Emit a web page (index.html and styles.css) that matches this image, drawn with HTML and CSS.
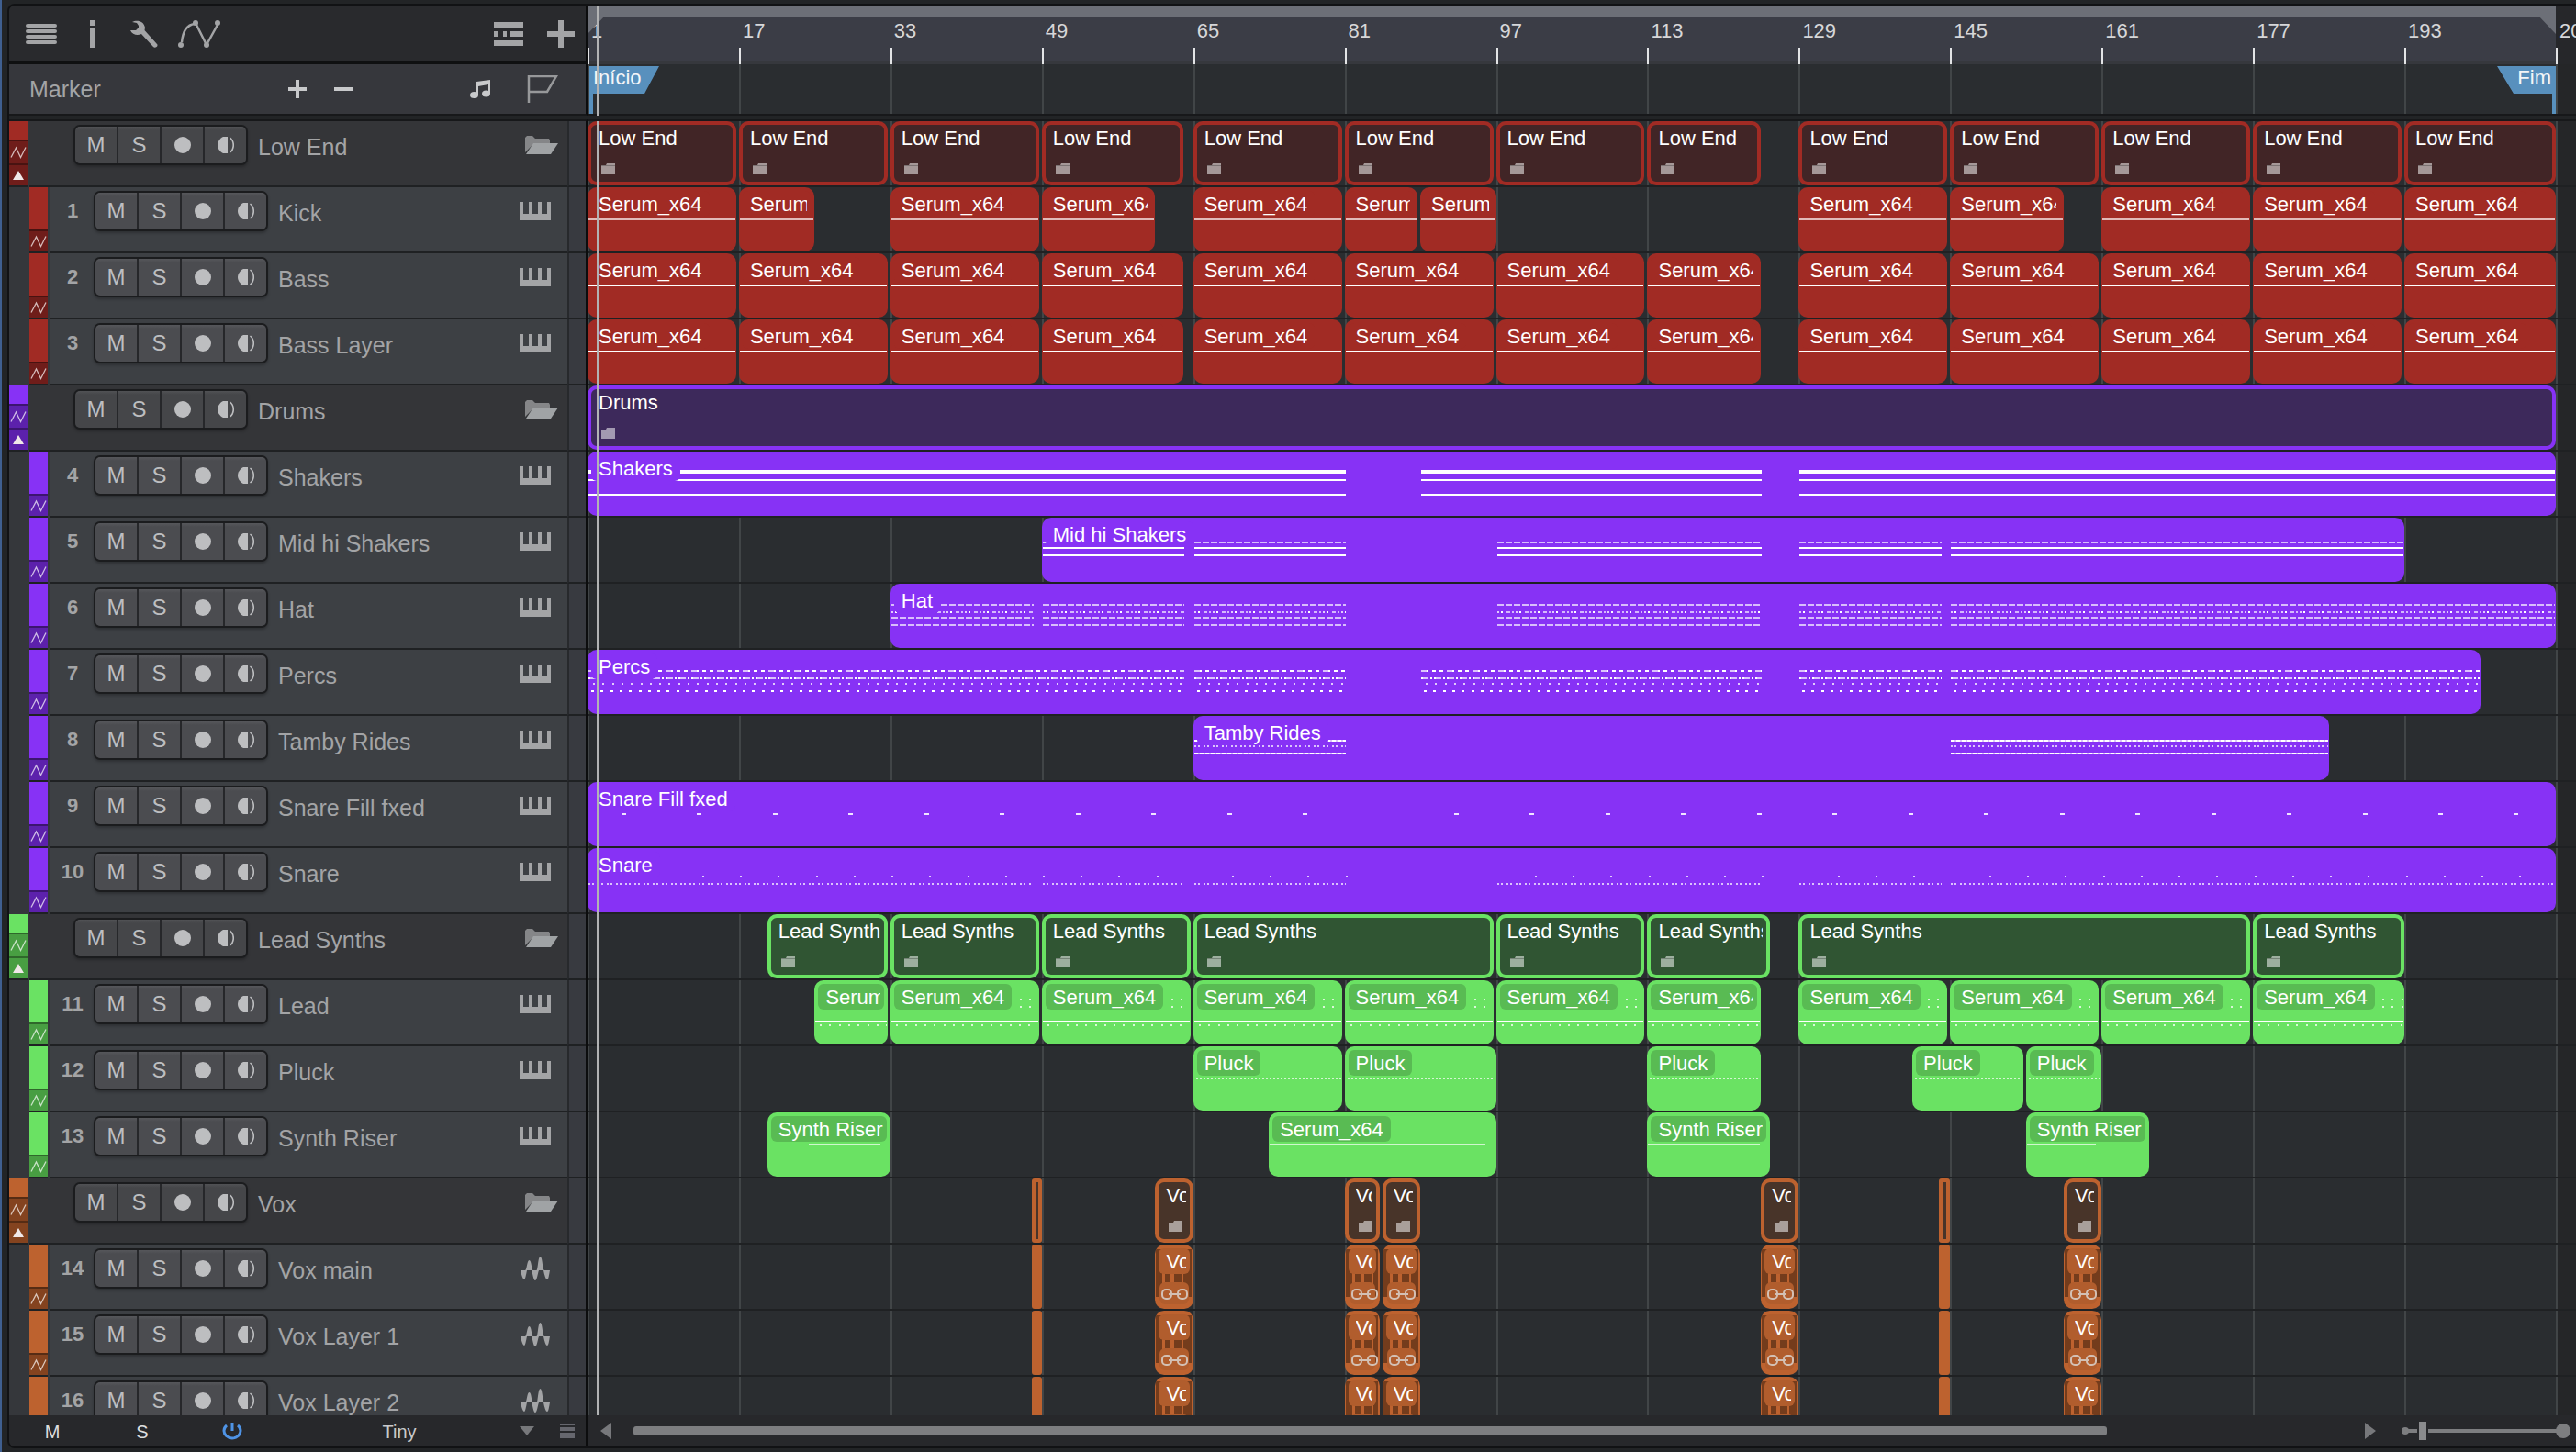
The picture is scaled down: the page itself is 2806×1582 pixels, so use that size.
FILE: index.html
```html
<!DOCTYPE html>
<html lang="en">
<head>
<meta charset="utf-8">
<title>Arrangement</title>
<link rel="stylesheet" href="styles.css">
</head>
<body>
<svg class="sprite" aria-hidden="true">
  <symbol id="i-rec" viewBox="0 0 18 18"><circle cx="9" cy="9" r="9"/></symbol>
  <symbol id="i-monitor" viewBox="0 0 18 18"><path d="M6 0h5v18H6C2 16 0 12 0 9s2-7 6-9z"/><path d="M13.500 1c5 4 5 12 0 16" fill="none" stroke="currentColor" stroke-width="1.600"/></symbol>
  <symbol id="i-automation" viewBox="0 0 20 20"><path d="M2 15.500L7.500 5l5 10.500L18 4.500" fill="none" stroke="currentColor" stroke-width="1.300"/></symbol>
  <symbol id="i-keys" viewBox="0 0 42 26"><path d="M0 3h4v13h6V3h4v13h6V3h4v13h6V3h4v20H0z"/></symbol>
  <symbol id="i-folder" viewBox="0 0 42 26"><path d="M6 21V5l2-2h6l3 3h15l1 2v3H16z" fill="#858688"/><path d="M15 11h27l-8 12H7z" fill="#a0a3a5"/></symbol>
  <symbol id="i-wave" viewBox="0 0 42 26"><path d="M1 15h5c2 0 2-11 4.500-11S13 15 14.500 15h4C20 15 20 0 22.500 0S25 15 27 15h6c-1 5-1.500 10-3 10s-3-5-4-10h-5c-1.500 4-2 11-4 11s-2.500-7-4-11H8c-1 5-2 10-3 10s-3-4-4-10z"/></symbol>
  <symbol id="i-clipfolder" viewBox="0 0 16 12"><path d="M0 2h5l1-2h9v12H0z"/><path d="M0 2.500h15" stroke="#000" stroke-opacity=".25"/></symbol>
  <symbol id="i-link" viewBox="0 0 30 12"><g fill="none" stroke="currentColor" stroke-width="2"><rect x="1" y="1" width="10" height="10" rx="4"/><rect x="18" y="1" width="10" height="10" rx="4"/><path d="M8 6h13"/></g></symbol>
</svg>

<main class="arranger">
  <header class="toolbar">
    <button class="tool" aria-label="Track list"><svg width="34" height="24" viewBox="0 0 34 24"><g stroke="currentColor" stroke-width="4" stroke-linecap="round"><path d="M2 3h30M2 9h30M2 15h30M2 21h30"/></g></svg></button>
    <button class="tool tool-info" aria-label="Inspector"><svg width="6" height="30" viewBox="0 0 6 30"><path d="M0 0h6v6H0zM0 8h6v22H0z"/></svg></button>
    <button class="tool" aria-label="Options"><svg width="30" height="30" viewBox="0 0 30 30"><path d="M2 2C7-1 15 1 16 8l-.5 3L29 26c2 2-2 5-4 3L12 15C8 17 2 16 0 11h6l3-3V6L7 3z"/></svg></button>
    <button class="tool" aria-label="Automation"><svg width="48" height="30" viewBox="0 0 48 30"><path d="M4 24C5 14 9 5 18 4M20 5l11 22M32 25L43 5" fill="none" stroke="currentColor" stroke-width="2.500"/><circle cx="3" cy="27" r="3"/><circle cx="19" cy="3" r="3"/><circle cx="31" cy="27" r="3"/><circle cx="43" cy="3" r="3"/></svg></button>
    <button class="tool tool-layout" aria-label="Track height layout"><svg width="32" height="26" viewBox="0 0 32 26"><path d="M0 0h32v6H0zM0 10h5v6H0zM10 10h4v6h-4zM18 10h14v6H18zM0 20h32v6H0z"/></svg></button>
    <button class="tool" aria-label="Add track"><svg width="30" height="30" viewBox="0 0 30 30"><path d="M12 0h6v12h12v6H18v12h-6V18H0v-6h12z"/></svg></button>
  </header>

  <div class="ruler" id="ruler">
    <div class="loop"></div>
  </div>

  <div class="marker-head">
    <h2 class="marker-title">Marker</h2>
    <button class="tool" aria-label="Add marker"><svg width="20" height="20" viewBox="0 0 20 20"><path d="M8 0h4v8h8v4h-8v8H8v-8H0V8h8z"/></svg></button>
    <button class="tool tool-minus" aria-label="Remove marker"><svg width="20" height="20" viewBox="0 0 20 20"><path d="M0 8h20v4H0z"/></svg></button>
    <button class="tool tool-note" aria-label="Timebase"><svg width="22" height="20" viewBox="0 0 22 20"><path d="M7 2l15-2v15h-2V5L9 7v9H7z"/><ellipse cx="4.500" cy="16.500" rx="4.500" ry="3.500"/><ellipse cx="17.500" cy="15" rx="4.500" ry="3.500"/></svg></button>
    <button class="tool tool-flag" aria-label="Marker flag"><svg width="34" height="30" viewBox="0 0 34 30"><path d="M2 30V1h30L22 18H2" fill="none" stroke="currentColor" stroke-width="2.500"/></svg></button>
  </div>

  <div class="marker-lane">
    <div class="flag flag-start"><span>Início</span></div>
    <div class="flag flag-end"><span>Fim</span></div>
  </div>

  <ul class="tracks" id="tracks"></ul>
  <div class="lanes" id="lanes"></div>

  <div class="playhead playhead-top"></div>

  <footer class="track-foot">
    <button class="foot-btn">M</button>
    <button class="foot-btn">S</button>
    <button class="foot-btn foot-power" aria-label="Enable"><svg width="22" height="20" viewBox="0 0 22 20"><path d="M5 3a9 8 0 1 0 12 0" fill="none" stroke="currentColor" stroke-width="3"/><path d="M11 0v9" stroke="currentColor" stroke-width="3"/></svg></button>
    <select class="size-select" aria-label="Track height"><option>Tiny</option><option>Small</option><option>Normal</option></select>
    <svg class="caret" width="16" height="10" viewBox="0 0 16 10"><path d="M0 0h16L8 10z"/></svg>
    <button class="foot-list" aria-label="Track height list"><svg width="16" height="16" viewBox="0 0 16 16"><path d="M0 0h16v2H0zM0 4h16v4H0zM0 10h16v6H0z"/></svg></button>
  </footer>

  <footer class="time-foot">
    <button class="scroll-btn" aria-label="Scroll left"><svg width="12" height="18" viewBox="0 0 12 18"><path d="M12 0v18L0 9z"/></svg></button>
    <div class="scroll-track"><div class="scroll-thumb"></div></div>
    <button class="scroll-btn" aria-label="Scroll right"><svg width="12" height="18" viewBox="0 0 12 18"><path d="M0 0v18l12-9z"/></svg></button>
    <label class="zoom"><span class="dot dot-small"></span><input type="range" min="0" max="100" value="7" aria-label="Zoom"><span class="dot dot-large"></span></label>
  </footer>
</main>
<script src="app.js"></script>
</body>
</html>
```
FILE: styles.css
```css
:root {
  --bar: calc(134px / 13);
  --song: calc(208 * var(--bar));
  --edge: #111214;
  --line: #1f2123;
  --lane: #2a2d30;
  --grid: #414547;
  --icon: #a3a4a6;
}

* { box-sizing: border-box; }

body {
  margin: 0;
  height: 100vh;
  padding: 4px 0 4px 8px;
  background: #222426;
  box-shadow: inset 2px 0 #3f5f90;
  color: #a3a4a6;
  font: 24px/28px "Liberation Sans", Arial, sans-serif;
  overflow: hidden;
}

button, select {
  border: 0;
  margin: 0;
  padding: 0;
  background: none;
  color: inherit;
  font: inherit;
}

svg { display: block; fill: currentColor; }
.sprite { position: absolute; width: 0; height: 0; }

.arranger {
  position: relative;
  height: 100%;
  display: grid;
  grid-template-columns: 630px minmax(0, 1fr);
  grid-template-rows: 64px 56px minmax(0, 1fr) 34px;
  border: 2px solid var(--edge);
  border-right: 0;
  border-radius: 8px 0 0 8px;
  overflow: hidden;
}

.toolbar, .marker-head, .tracks, .track-foot { border-right: 2px solid #0c0d0e; }

/* Toolbar */
.toolbar {
  display: flex;
  align-items: center;
  gap: 22px;
  padding: 2px 12px 0 18px;
  background: #292a2d;
  border-bottom: 4px solid #0f1011;
  color: var(--icon);
}
.toolbar .tool-info { margin: 0 16px 0 14px; }
.toolbar .tool-layout { margin: 0 4px 0 auto; }

.marker-head {
  display: flex;
  align-items: center;
  padding: 0 30px 0 22px;
  background: #36373c;
  border-bottom: 2px solid #17181a;
  color: #c8c9cb;
}
.marker-title {
  width: 282px;
  margin: 0;
  font-size: 25px;
  font-weight: 400;
  color: var(--icon);
}
.tool-minus { margin-left: 30px; }
.tool-note { margin-left: auto; }
.tool-flag { margin-left: 40px; color: #97989a; }

/* Ruler */
.ruler {
  position: relative;
  overflow: hidden;
  background: #26272a;
  font-size: 22px;
  color: #d6d7d9;
}
.loop {
  width: var(--song);
  height: 100%;
  border-top: 12px solid #6c6f77;
  background: #3b3d46;
  border-bottom: 4px solid #36383d;
}
.loop::before, .loop::after {
  content: "";
  position: absolute;
  z-index: 2;
  top: 10px;
  width: 20px;
  height: 21px;
  background: #6c6f77;
}
.loop::before { left: 0; clip-path: polygon(0 0, 100% 0, 0 100%); }
.loop::after { left: calc(var(--song) - 20px); clip-path: polygon(0 0, 100% 0, 100% 100%); }
.tick {
  position: absolute;
  top: 0;
  bottom: 0;
  left: calc(var(--at) * var(--bar));
  padding: 14px 0 0 4px;
}
.tick::before {
  content: "";
  position: absolute;
  left: 0;
  bottom: 0;
  width: 2px;
  height: 18px;
  background: #e3e4e6;
}

.marker-lane, .lane {
  background:
    linear-gradient(90deg, transparent calc(var(--song) + 2px), #252628 0),
    repeating-linear-gradient(90deg, var(--grid) 0 2px, transparent 2px calc(16 * var(--bar))),
    var(--lane);
}
.marker-lane {
  position: relative;
  border-bottom: 2px solid #17181a;
  font-size: 22px;
  line-height: 26px;
  color: #f4f6f8;
}
.flag {
  position: absolute;
  top: 2px;
  height: 52px;
  background: #5890bd;
}
.flag-start {
  left: 2px;
  width: 76px;
  padding-left: 4px;
  clip-path: polygon(0 0, 100% 0, 60px 30px, 4px 30px, 4px 100%, 0 100%);
}
.flag-end {
  left: calc(var(--song) - 64px);
  width: 64px;
  padding-right: 5px;
  text-align: right;
  clip-path: polygon(0 0, 100% 0, 100% 100%, 60px 100%, 60px 30px, 18px 30px);
}

/* Track list */
.tracks, .lanes {
  margin: 4px 0 0;
  padding: 0;
  list-style: none;
  border-top: 2px solid #17181a;
  overflow: hidden;
}
.tracks { background: #35373b; }

.red { --hue: #a12b24; --deep: #6f1d1a; --fill: #412526; --tag: #a12b24; }
.purple { --hue: #8732f5; --deep: #5c21ac; --fill: #3d295b; --tag: #8732f5; }
.green { --hue: #6ae263; --deep: #489e42; --fill: #305533; --tag: #59bb53; }
.orange { --hue: #bd622f; --deep: #84431f; --fill: #483429; --tag: #b15d2d; }

.track {
  display: flex;
  height: 72px;
  padding-left: 22px;
}
.track.folder { padding-left: 0; }
.strip {
  display: flex;
  flex-direction: column;
  gap: 2px;
  width: 20px;
  margin-right: 2px;
  background: color-mix(in srgb, var(--deep) 65%, #000);
  border-bottom: 2px solid var(--line);
  color: rgba(255, 255, 255, .7);
}
.strip .swatch { flex: 1; background: var(--hue); }
.strip .auto, .strip .fold {
  display: grid;
  place-items: center;
  width: 20px;
  height: 22px;
  background: var(--deep);
  color: inherit;
}
.folder .auto { height: 24px; }
.strip .fold { color: #f0e8e8; }
.track-body {
  flex: 1;
  display: flex;
  align-items: center;
  padding: 4px 10px 22px 0;
  background: #3d4044;
  border-bottom: 2px solid var(--line);
}
.folder .track-body { padding-left: 48px; background: #343538; }
.track-end {
  width: 20px;
  border-left: 2px solid #27292c;
  border-bottom: 2px solid var(--line);
  background: #383a40;
}
.track-num {
  width: 48px;
  padding-left: 2px;
  text-align: center;
  font-size: 22px;
  font-weight: 700;
}
.switches {
  display: flex;
  gap: 2px;
  width: 190px;
  height: 44px;
  border: 2px solid #1b1c1e;
  border-radius: 7px;
  background: #26272a;
  box-shadow: 0 2px 3px rgba(0, 0, 0, .25);
  overflow: hidden;
}
.switches button {
  flex: 1;
  display: grid;
  place-items: center;
  background: linear-gradient(#56575b, #4b4c50 4px);
  color: #bdbec0;
}
.folder .switches button { background: linear-gradient(#515255, #454649 4px); }
.track-name { flex: 1; padding: 3px 0 0 11px; font-size: 25px; }

/* Clips */
.lane {
  position: relative;
  height: 72px;
  border-bottom: 2px solid var(--line);
}
.clip {
  position: absolute;
  top: 0;
  left: calc(var(--at) * var(--bar));
  width: calc(var(--len) * var(--bar));
  height: 70px;
  border-radius: 10px;
  background: var(--hue);
  overflow: hidden;
  color: #fff;
  font-size: 22px;
}
.clip.joined { width: calc(var(--len) * var(--bar) - 3px); }
.clip.group { background: var(--fill); box-shadow: inset 0 0 0 4px var(--hue); }
.clip.sliver { border-radius: 3px; }
.label {
  position: absolute;
  top: 4px;
  left: 4px;
  max-width: calc(100% - 8px);
  height: 28px;
  padding: 1px 4px 0 8px;
  border-radius: 6px;
  background: var(--tag);
}
.group .label { background: none; }
.label span {
  display: block;
  padding-right: 4px;
  overflow: hidden;
  white-space: nowrap;
}
.clip-icon { position: absolute; left: 15px; top: 46px; color: rgba(255, 255, 255, .53); }

.notes {
  position: absolute;
  top: var(--y);
  left: calc(var(--from) * var(--bar) + var(--inset, 1px));
  right: calc(var(--rest) * var(--bar) + 1px);
  height: 2px;
}
.solid { background: #fff; }
.thick { height: 4px; background: #fff; }
.soft { background: rgba(255, 255, 255, .68); }
.dash { background: repeating-linear-gradient(90deg, rgba(255, 255, 255, .68) 0 7px, transparent 7px 9px); }
.mixed { background: repeating-linear-gradient(90deg, rgba(255, 255, 255, .75) 0 2px, transparent 2px 4px, #fff 4px 6px, transparent 6px 10px, rgba(255, 255, 255, .65) 10px 14px, transparent 14px 16px, rgba(255, 255, 255, .65) 16px 18px, transparent 18px 20px); }
.busy { background: repeating-linear-gradient(90deg, rgba(255, 255, 255, .7) 0 6px, #fff 6px 8px, transparent 8px 12px, #fff 12px 16px, transparent 16px 20px, #fff 20px 24px, transparent 24px 28px); }
.dense { background: repeating-linear-gradient(90deg, #fff 0 2px, rgba(255, 255, 255, .7) 2px 8px, transparent 8px 10px, #fff 10px 12px, transparent 12px 14px); }
.full { background: repeating-linear-gradient(90deg, #fff 0 4px, rgba(255, 255, 255, .7) 4px 6px); }
.dots { background: repeating-linear-gradient(90deg, transparent 0 2px, rgba(255, 255, 255, .7) 2px 4px); }
.pairs { background: repeating-linear-gradient(90deg, rgba(255, 255, 255, .7) 0 2px, transparent 2px 4px, rgba(255, 255, 255, .7) 4px 6px, transparent 6px 10px); }
.beats { background: repeating-linear-gradient(90deg, transparent 0 5px, rgba(255, 255, 255, .75) 5px 7px, transparent 7px var(--bar)); }
.strong { background: repeating-linear-gradient(90deg, transparent 0 3px, #fff 3px 6px, transparent 6px var(--bar)); }
.fills { background: repeating-linear-gradient(90deg, #f0e4ff 0 5px, transparent 5px calc(8 * var(--bar))); }
.hits { background: repeating-linear-gradient(90deg, rgba(255, 255, 255, .75) 0 2px, transparent 2px calc(4 * var(--bar))); }
.lead-top { --inset: 136px; }

/* Audio clip: waveform blocks behind the name and link tags */
.wave {
  position: absolute;
  inset: 5px 2px 13px 1px;
  background: linear-gradient(90deg, #743c1c 0 7px, var(--hue) 7px 10px, #743c1c 10px 16px, var(--hue) 16px 20px, #743c1c 20px 28px, var(--hue) 28px 30px, #743c1c 30px);
}
.link {
  position: absolute;
  top: 41px;
  left: 5px;
  right: 5px;
  height: 24px;
  border-radius: 6px;
  background: var(--tag);
}
.link-icon { position: absolute; left: 7px; top: 48px; color: #d3c0b4; }

.playhead {
  position: absolute;
  left: 640px;
  z-index: 3;
  width: 2px;
  background: #b2b3b4;
}
.playhead-top { top: 0; height: 120px; }
.lanes { position: relative; }
.lanes .playhead { left: 10px; top: 0; bottom: 0; }

/* Bottom bars */
.track-foot, .time-foot { display: flex; align-items: center; background: #27282b; }
.track-foot { font-size: 20px; color: #dcdddf; }
.foot-btn { width: 98px; height: 34px; padding: 2px 4px 0 0; }
.foot-power { display: grid; place-items: center; color: #4f94e6; }
.size-select {
  width: 262px;
  height: 34px;
  padding-top: 2px;
  appearance: none;
  text-align: center;
  text-align-last: center;
  color: #c9cacc;
}
.caret { color: #77787b; }
.foot-list { margin-left: 28px; color: #66676e; }
.time-foot { padding: 0 6px 0 14px; color: #77787b; }
.scroll-track { flex: 1; margin: 0 20px 0 24px; }
.scroll-thumb { width: 86%; height: 10px; border-radius: 3px; background: #7d7e80; }
.zoom { display: flex; align-items: center; margin-left: 28px; }
.dot { border-radius: 50%; background: #7d7e80; }
.dot-small { width: 8px; height: 8px; }
.dot-large { width: 16px; height: 16px; }
.zoom input {
  width: 164px;
  height: 20px;
  margin: 0 -2px;
  appearance: none;
  background: linear-gradient(#7d7e80, #7d7e80) center / 100% 4px no-repeat;
}
.zoom input::-webkit-slider-thumb {
  appearance: none;
  width: 12px;
  height: 20px;
  border: solid #27282b;
  border-width: 0 2px;
  background: #8a8b8d;
}
```
FILE: app.js
```js
// Clips are [start bar, end bar, optional name]; notes are [style, y, ranges of bars].
const every16 = (from, to) => {
  const out = [];
  for (let b = from; b < to; b += 16) out.push([b, b + 16]);
  return out;
};
const bass = [...every16(1, 49), [49, 64], ...every16(65, 113), [113, 125], ...every16(129, 209)];
const vox = [[48, 49], [61, 65], [81, 85], [85, 89], [125, 129], [143.800, 145], [157, 161]];
const whole = [[1, 209]];
const midSegs = [[49, 64.200], [65, 81.200], [97, 125.200], [129, 144.200], [145, 193]];
const hatSegs = [[33, 48.200], [49, 64.200], [65, 81.200], [97, 125.200], [129, 144.200], [145, 209]];
const percSegs = [[1, 64.200], [65, 81.200], [89, 125.200], [129, 144.200], [145, 201]];
const shakerSegs = [[1, 81.200], [89, 125.200], [129, 209]];
const tambySegs = [[65, 81.200], [145, 185]];
const bassLine = [['solid', 34]];

const tracks = [
  { name: 'Low End', hue: 'red', folder: true, clips: bass },
  { name: 'Kick', hue: 'red', clip: 'Serum_x64', notes: [['soft', 34]],
    clips: [[1, 17], [17, 25], [33, 49], [49, 61], [65, 81], [81, 89], [89, 97], [129, 145], [145, 157], ...every16(161, 209)] },
  { name: 'Bass', hue: 'red', clip: 'Serum_x64', notes: bassLine, clips: bass },
  { name: 'Bass Layer', hue: 'red', clip: 'Serum_x64', notes: bassLine, clips: bass },
  { name: 'Drums', hue: 'purple', folder: true, clips: whole },
  { name: 'Shakers', hue: 'purple', clips: whole,
    notes: [['thick', 20, shakerSegs], ['solid', 30, shakerSegs], ['solid', 46, shakerSegs]] },
  { name: 'Mid hi Shakers', hue: 'purple', clips: [[49, 193]],
    notes: [['dash', 26, midSegs], ['solid', 32, midSegs], ['solid', 40, midSegs]] },
  { name: 'Hat', hue: 'purple', clips: [[33, 209]],
    notes: [['dash', 22, hatSegs], ['mixed', 30, hatSegs], ['dash', 36, hatSegs], ['dash', 44, hatSegs]] },
  { name: 'Percs', hue: 'purple', clips: [[1, 201]],
    notes: [['busy', 22, percSegs], ['dense', 30, percSegs], ['beats', 36, percSegs], ['strong', 44, percSegs]] },
  { name: 'Tamby Rides', hue: 'purple', clips: [[65, 185]],
    notes: [['full', 26, tambySegs], ['pairs', 32, tambySegs], ['full', 40, tambySegs]] },
  { name: 'Snare Fill fxed', hue: 'purple', clips: whole,
    notes: [['fills', 34, [[4.500, 78], [92.500, 209]]]] },
  { name: 'Snare', hue: 'purple', clips: whole,
    notes: [['hits', 30, [[13, 46], [49, 62], [69, 82], [101, 126], [133, 142], [149, 209]]],
            ['pairs', 38, [[1, 48], ...hatSegs.slice(1)]]] },
  { name: 'Lead Synths', hue: 'green', folder: true,
    clips: [[20, 33], [33, 49], [49, 65], [65, 97], [97, 113], [113, 126], [129, 177], [177, 193]] },
  { name: 'Lead', hue: 'green', clip: 'Serum_x64',
    notes: [['beats lead-top', 20], ['beats lead-top', 28], ['solid', 44], ['beats', 48]],
    clips: [[25, 33], ...every16(33, 113), [113, 125], ...every16(129, 193)] },
  { name: 'Pluck', hue: 'green', notes: [['dots', 34]],
    clips: [[65, 81], [81, 97], [113, 125], [141, 153], [153, 161]] },
  { name: 'Synth Riser', hue: 'green',
    notes: [['soft', 34, [[24.300, 32], [73, 96], [113, 125], [153, 160.500]]]],
    clips: [[20, 33], [73, 97, 'Serum_x64'], [113, 126], [153, 166]] },
  { name: 'Vox', hue: 'orange', folder: true, clips: vox },
  { name: 'Vox main', hue: 'orange', audio: true, clips: vox },
  { name: 'Vox Layer 1', hue: 'orange', audio: true, clips: vox },
  { name: 'Vox Layer 2', hue: 'orange', audio: true, clips: vox },
];

const icon = (id, w, h, cls = '') =>
  `<svg class="${cls}" width="${w}" height="${h}"><use href="#i-${id}"/></svg>`;

const switches = `<div class="switches">
  <button aria-label="Mute">M</button><button aria-label="Solo">S</button>
  <button aria-label="Record">${icon('rec', 18, 18)}</button>
  <button aria-label="Monitor">${icon('monitor', 18, 18)}</button></div>`;

let number = 0;
function trackHtml(t) {
  const type = t.folder ? 'folder' : t.audio ? 'wave' : 'keys';
  const fold = t.folder
    ? '<button class="fold" aria-label="Collapse"><svg width="12" height="10"><path d="M6 0l6 10H0z"/></svg></button>' : '';
  const num = t.folder ? '' : `<span class="track-num">${++number}</span>`;
  return `<li class="track ${t.hue} ${t.folder ? 'folder' : ''}">
    <div class="strip"><span class="swatch"></span><button class="auto" aria-label="Automation">${icon('automation', 20, 20)}</button>${fold}</div>
    <div class="track-body">${num}${switches}<span class="track-name">${t.name}</span>${icon(type, 42, 26)}</div>
    <div class="track-end"></div></li>`;
}

function notesHtml(t, start, end) {
  return (t.notes || []).map(([style, y, segs]) =>
    (segs || [[start, end]])
      .filter(([a, b]) => a >= start && b <= end + 1)
      .map(([a, b]) => `<i class="notes ${style}" style="--y:${y}px;--from:${a - start};--rest:${Math.max(0, end - b)}"></i>`)
      .join('')).join('');
}

function clipHtml(t, [start, end, name]) {
  const len = end - start;
  const classes = ['clip'];
  const sliver = len < 2;
  if (t.folder) classes.push('group');
  if (sliver) classes.push('sliver');
  // A clip that runs straight into the next one leaves a seam between them.
  if (t.clips.some(c => c[0] === end)) classes.push('joined');
  let inner = '';
  if (!sliver) {
    inner = notesHtml(t, start, end);
    if (t.audio) inner += '<i class="wave"></i><i class="link"></i>' + icon('link', 30, 12, 'link-icon');
    inner += `<div class="label"><span>${name || t.clip || t.name}</span></div>`;
    if (t.folder) inner += icon('clipfolder', 16, 12, 'clip-icon');
  }
  return `<div class="${classes.join(' ')}" style="--at:${start - 1};--len:${len}">${inner}</div>`;
}

document.getElementById('tracks').innerHTML = tracks.map(trackHtml).join('');
document.getElementById('lanes').innerHTML =
  tracks.map(t => `<div class="lane ${t.hue}">${t.clips.map(c => clipHtml(t, c)).join('')}</div>`).join('') +
  '<div class="playhead"></div>';

let ticks = '';
for (let b = 1; b <= 209; b += 16) ticks += `<span class="tick" style="--at:${b - 1}">${b}</span>`;
document.getElementById('ruler').insertAdjacentHTML('beforeend', ticks);
```
